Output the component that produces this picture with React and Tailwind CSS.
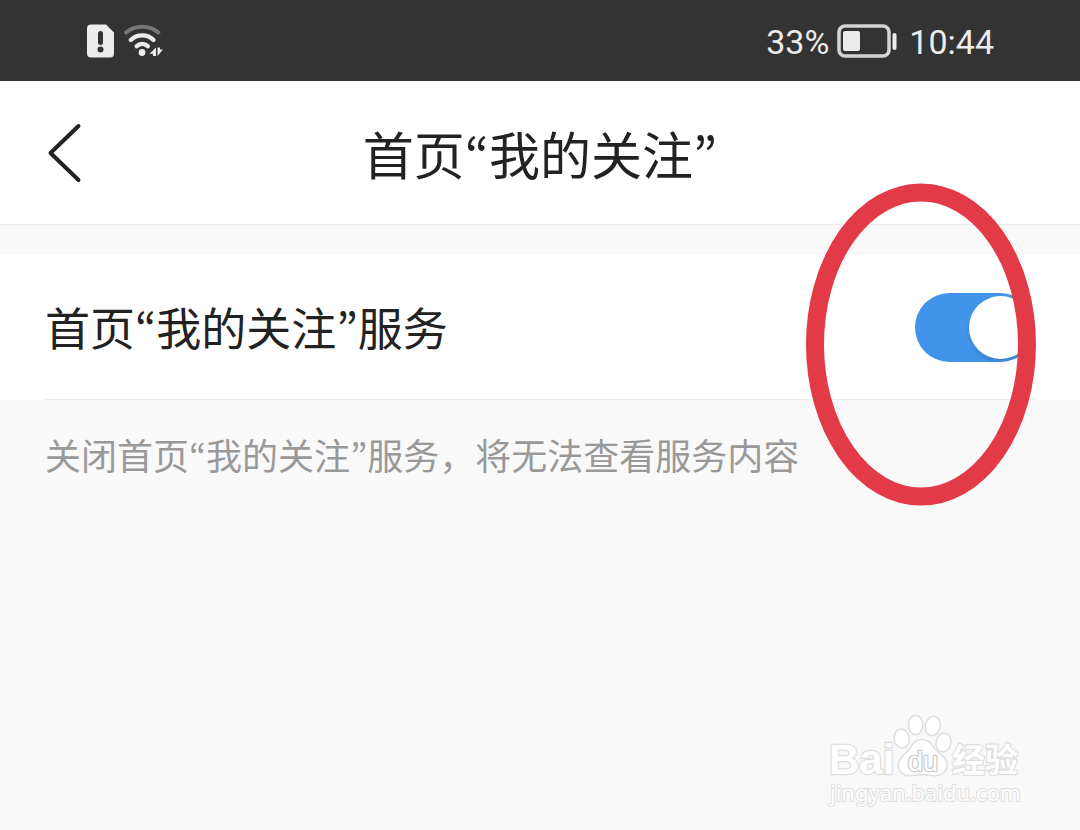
import React, { useState } from 'react';

const StatusBar = () => (
  <div className="flex h-[81px] items-center justify-between bg-[#333333] pl-[86px] pr-[86px] text-[#ececec]">
    <div className="flex items-center gap-2">
      <svg width="30" height="36" viewBox="0 0 30 36" fill="none" aria-hidden="true">
        <path d="M5 1.500H20L28 9.500V30.500a4 4 0 0 1-4 4H5a4 4 0 0 1-4-4V5.500a4 4 0 0 1 4-4z" fill="#ececec" />
        <path d="M14.500 10.500V19.500" stroke="#333333" strokeWidth="5" strokeLinecap="round" />
        <circle cx="14.500" cy="26.500" r="3" fill="#333333" />
      </svg>
      <svg width="40" height="36" viewBox="0 0 40 36" fill="none" strokeLinecap="round" aria-hidden="true">
        <path d="M2.200 9.500C11 1.800 25.500 1.800 34.300 9.500" stroke="#777777" strokeWidth="4" />
        <path d="M6.800 17C13 10.800 23.500 10.800 29.500 17" stroke="#ececec" strokeWidth="4.400" />
        <path d="M12.700 23.200C16 20.200 20.500 20.200 23.800 23.200" stroke="#ececec" strokeWidth="4.400" />
        <circle cx="18" cy="29.500" r="3.400" fill="#ececec" />
        <path d="M32 24.500V33H29V30.700H25.500Z" fill="#ececec" />
        <path d="M33.500 33V24.500H36V26.500H39Z" fill="#ececec" />
      </svg>
    </div>
    <div className="flex items-center gap-2 font-['Roboto','Noto_Sans',sans-serif] text-[34px] leading-10">
      <span className="pt-0.5">33%</span>
      <svg width="60" height="34" viewBox="0 0 60 34" fill="none" aria-hidden="true">
        <rect x="2" y="2" width="50" height="30" rx="6" stroke="#d4d4d4" strokeWidth="3.500" />
        <rect x="6" y="7" width="17" height="20" rx="2" fill="#ececec" />
        <path d="M57.500 11V24" stroke="#ececec" strokeWidth="4" strokeLinecap="round" />
      </svg>
      <span className="pl-1 pt-0.5">10:44</span>
    </div>
  </div>
);

// Chinese faces draw curly quotes full width, so the quotes get a proportional one
const Quote = ({ children }) => (
  <span lang="en" className="font-['Noto_Sans_CJK_KR',sans-serif]">{children}</span>
);

const FeatureName = () => (
  <>
    首页<Quote>“</Quote>我的关注<Quote>”</Quote>
  </>
);

const Watermark = () => (
  <svg width="210" height="106" viewBox="0 0 210 106" fill="#ffffff" stroke="#dedede" strokeWidth="1.500" role="img" aria-label="Baidu 经验">
    <ellipse cx="79.700" cy="30.500" rx="7.500" ry="9.500" transform="rotate(-10 79.700 30.500)" />
    <ellipse cx="93.700" cy="17" rx="7.200" ry="9.700" />
    <ellipse cx="110.700" cy="18" rx="7.500" ry="9.700" transform="rotate(12 110.700 18)" />
    <ellipse cx="121.500" cy="34.500" rx="7.500" ry="9.500" transform="rotate(12 121.500 34.500)" />
    <path d="M100 31.500C91 31.500 89 40 84 45C79 49 75.500 53 76.500 59C77.500 66 84 68.500 90 67.500C97 66.500 104 66.500 110 67.500C117 68.500 124 65.500 125 58C126 52 121 48 116 44C111 40 109 31.500 100 31.500Z" />
    <g className="font-['Liberation_Sans','Noto_Sans_CJK_SC',sans-serif]" paintOrder="stroke" strokeWidth="2.500" strokeLinejoin="round">
      <text x="7" y="66" className="text-[42px] font-bold">Bai</text>
      <text x="86" y="63" className="text-[27px]" stroke="#cccccc">du</text>
      <text x="130" y="64" className="text-[33px] font-bold">经验</text>
      <text x="8" y="93" className="font-['Noto_Sans',sans-serif] text-[22px]" strokeWidth="2">jingyan.baidu.com</text>
    </g>
  </svg>
);

const App = () => {
  const [enabled, setEnabled] = useState(true);

  return (
    <div className="flex min-h-screen flex-col bg-[#f9f9f9] font-['Noto_Sans_CJK_SC',sans-serif] text-[#222222]" lang="zh-CN">
      <StatusBar />

      <header className="grid h-36 grid-cols-[90px_1fr_90px] items-center border-b border-[#ececec] bg-white">
        <button type="button" aria-label="返回" className="flex justify-end pr-2">
          <svg width="36" height="62" viewBox="0 0 36 62" fill="none" stroke="currentColor" strokeWidth="4" strokeLinecap="round" strokeLinejoin="round" aria-hidden="true">
            <path d="M32.500 4L4.500 31L32.500 58" />
          </svg>
        </button>
        <h1 className="text-center text-[51px] leading-[72px]">
          <FeatureName />
        </h1>
      </header>

      <main className="pt-[30px]">
        <div className="relative bg-white px-[45px]">
          <div className="flex h-[145px] items-center justify-between border-b border-[#ececec]">
            <label htmlFor="follow-service" className="text-[45px] leading-[64px]">
              <FeatureName />服务
            </label>
            <input
              id="follow-service"
              type="checkbox"
              role="switch"
              checked={enabled}
              onChange={e => setEnabled(e.target.checked)}
              className="flex h-[69px] w-[120px] cursor-pointer appearance-none items-center rounded-full bg-[#d8d8d8] px-[3px] before:block before:size-[63px] before:rounded-full before:bg-white before:shadow-md before:content-[''] checked:justify-end checked:bg-[#4293ea]"
            />
          </div>
          {/* Red ring around the switch */}
          <svg className="pointer-events-none absolute -top-[73px] right-[43px]" width="232" height="324" viewBox="0 0 232 324" fill="none" aria-hidden="true">
            <ellipse cx="116" cy="162.500" rx="106" ry="152" stroke="#e23a46" strokeWidth="18" />
          </svg>
        </div>
        <p className="px-[45px] pt-7 text-[36px] leading-[52px] text-[#999999]">
          关闭<FeatureName />服务，将无法查看服务内容
        </p>
      </main>

      <footer className="mt-auto flex justify-end pb-4 pr-12">
        <Watermark />
      </footer>
    </div>
  );
};

export default App;
